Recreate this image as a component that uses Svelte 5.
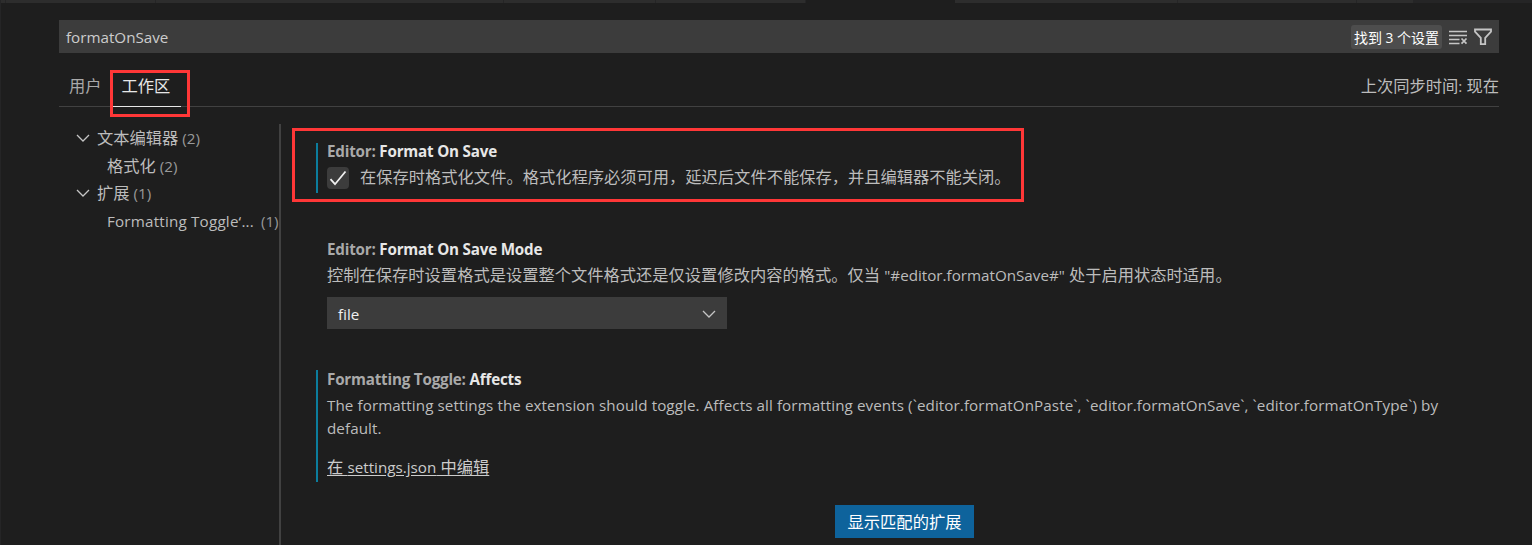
<script>
  const tabs = [
    { w: 6 }, { w: 150 }, { w: 348 }, { w: 152 }, { w: 150 },
    { w: 149, active: true }, { w: 223 }, { w: 179 }, { w: 57 }
  ];
</script>

{#snippet chevron()}
  <svg class="chevron" width="14" height="8" viewBox="0 0 14 8"><path d="M1 1l6 6 6-6" /></svg>
{/snippet}

<div class="window">
  <div class="tabs">
    {#each tabs as tab}
      <span class:active={tab.active} style="width:{tab.w}px"></span>
    {/each}
  </div>

  <div class="search">
    <span class="query">formatOnSave</span>
    <span class="count">找到 <i>3</i> 个设置</span>
    <svg class="clear" width="19" height="18" viewBox="0 0 19 18"><path d="M0 3.500h18M0 7.500h18M0 11.500h10.500M0 15.500h10.500" /><path class="cross" d="M12.500 10.500l5 5.200M17.500 10.500l-5 5.200" /></svg>
    <svg class="filter" width="19" height="18" viewBox="0 0 19 18"><path d="M1 1.500h16v2.200l-5.800 6.200v6.300h-4.400V9.900L1 3.700z" /></svg>
  </div>

  <div class="scopes">
    <span class="scope">用户</span>
    <span class="scope selected">工作区<b class="mark"></b></span>
    <span class="sync">上次同步时间<i>:</i> 现在</span>
  </div>

  <div class="body">
    <div class="toc">
      <div class="row">{@render chevron()}<span>文本编辑器</span><em>(2)</em></div>
      <div class="row child"><span>格式化</span><em>(2)</em></div>
      <div class="row">{@render chevron()}<span>扩展</span><em>(1)</em></div>
      <div class="row child last"><span class="toggle">Formatting Toggle‘...</span><em>(1)</em></div>
    </div>

    <div class="settings">
      <section class="setting changed first">
        <h3><span>Editor:</span> <strong>Format On Save</strong></h3>
        <div class="check">
          <span class="box"><svg width="22" height="22" viewBox="0 0 22 22"><path d="M3.500 12.200l4.500 5L18.500 4.500" /></svg></span>
          <span>在保存时格式化文件。格式化程序必须可用，延迟后文件不能保存，并且编辑器不能关闭。</span>
        </div>
        <b class="mark wide"></b>
      </section>

      <section class="setting second">
        <h3><span>Editor:</span> <strong>Format On Save Mode</strong></h3>
        <p>控制在保存时设置格式是设置整个文件格式还是仅设置修改内容的格式。仅当 <i>"#editor.formatOnSave#"</i> 处于启用状态时适用。</p>
        <div class="select"><span>file</span>{@render chevron()}</div>
      </section>

      <section class="setting changed third">
        <h3><span>Formatting Toggle:</span> <strong>Affects</strong></h3>
        <p class="latin">The formatting settings the extension should toggle. Affects all formatting events (`editor.formatOnPaste`, `editor.formatOnSave`, `editor.formatOnType`) by<br />default.</p>
        <p class="edit"><u>在 <i>settings.json</i> 中编辑</u></p>
      </section>

      <button>显示匹配的扩展</button>
    </div>
  </div>
</div>

<style>
  :global(body) { margin: 0; background: #1e1e1e; }
  .window {
    box-sizing: border-box; width: 1532px; height: 545px; overflow: hidden;
    background: #1e1e1e; color: #bcbcbc; border-left: 1px solid #252526;
    font: 16.28px/22px "Open Sans", "Noto Sans CJK SC", sans-serif;
  }
  i, em { font-style: normal; font-size: 15.2px; }
  .tabs { display: flex; height: 3px; margin-left: -1px; background: #252526; }
  .tabs span { box-sizing: border-box; flex: none; background: #2d2d2d; border-right: 1px solid #252526; }
  .tabs .active { background: #1e1e1e; border: 0; }

  .search {
    box-sizing: border-box; display: flex; align-items: center; width: 1440px; height: 33px;
    margin: 17px 0 0 58px; padding: 0 6px 0 7px; background: #3c3c3c; color: #ccc;
  }
  .query { flex: 1; font-size: 15.2px; }
  .count {
    box-sizing: border-box; width: 91px; height: 24px; line-height: 25px; text-align: center;
    border-radius: 3px; background: #4d4d4d; color: #fff; font-size: 14px; white-space: nowrap;
  }
  .count i { font-size: 13.75px; }
  svg { fill: none; stroke: #c5c5c5; flex: none; }
  .clear { margin-left: 7px; stroke-width: 1.3; }
  .cross { stroke-width: 1.7; }
  .filter { margin-left: 6px; stroke-width: 1.8; }

  .scopes {
    box-sizing: border-box; display: flex; width: 1440px; height: 40px; margin: 14px 0 0 58px;
    border-bottom: 1px solid #414141; line-height: 39px; color: #a9a9a9;
  }
  .scope { box-sizing: border-box; height: 40px; padding: 0 10px; }
  .selected { position: relative; width: 69px; color: #e7e7e7; border-bottom: 1px solid #e7e7e7; }
  .sync { margin-left: auto; color: #bcbcbc; }
  .mark { position: absolute; box-sizing: border-box; border: 3px solid #ff3737; left: -2px; top: 3px; width: 80px; height: 47px; }

  .body { display: flex; height: 421px; margin-top: 17px; }
  .toc { box-sizing: border-box; flex: none; width: 280px; padding-left: 75px; border-right: 2px solid #414141; white-space: nowrap; }
  .row { display: flex; align-items: center; height: 27.75px; }
  .row .chevron { margin-right: 7px; }
  .row em { margin-left: 4px; color: #999; }
  .child { padding-left: 31px; }
  .toggle { font-size: 15.2px; letter-spacing: 0.2px; }
  .row.last em { margin-left: 7px; }
  .chevron { stroke-width: 1.3; }

  .settings { display: flex; flex-direction: column; align-items: flex-start; }
  .setting { box-sizing: border-box; position: relative; margin-left: 35px; padding-left: 9px; border-left: 2px solid transparent; white-space: nowrap; }
  .changed { border-color: #0c7d9d; }
  h3 { margin: 0; font-size: 15.2px; font-weight: 700; line-height: 18px; color: #a9a9a9; letter-spacing: -0.2px; }
  strong { font-weight: 700; color: #e7e7e7; }
  p { margin: 0; }
  .first { height: 50px; margin-top: 19px; }
  .first h3, .second h3 { margin-top: -1px; }
  .check { display: flex; gap: 11px; margin-top: 7px; }
  .check > span:last-child { position: relative; top: -1px; }
  .box { width: 22px; height: 22px; border-radius: 4px; background: #3c3c3c; }
  .box svg { display: block; stroke: #f0f0f0; stroke-width: 1.8; }
  .wide { left: -26px; top: -15px; width: 732px; height: 74px; }
  .second { height: 88px; margin-top: 48px; }
  .second p { margin-top: 6px; }
  .select {
    box-sizing: border-box; display: flex; align-items: center; justify-content: space-between;
    width: 400px; height: 32px; margin-top: 11px; padding: 2px 11px 0; background: #3c3c3c; color: #f0f0f0; font-size: 15.2px;
  }
  .third { height: 112px; margin-top: 41px; }
  .latin { margin-top: 6px; font-size: 15.2px; line-height: 23px; letter-spacing: 0.083px; }
  .edit { margin-top: 16px; color: #ccc; }
  u { text-underline-offset: 2px; }
  button {
    width: 139px; height: 33px; margin: 23px 0 0 554px; padding: 0; border: 0; background: #0e639c;
    color: #fff; font: inherit; white-space: nowrap;
  }
</style>
